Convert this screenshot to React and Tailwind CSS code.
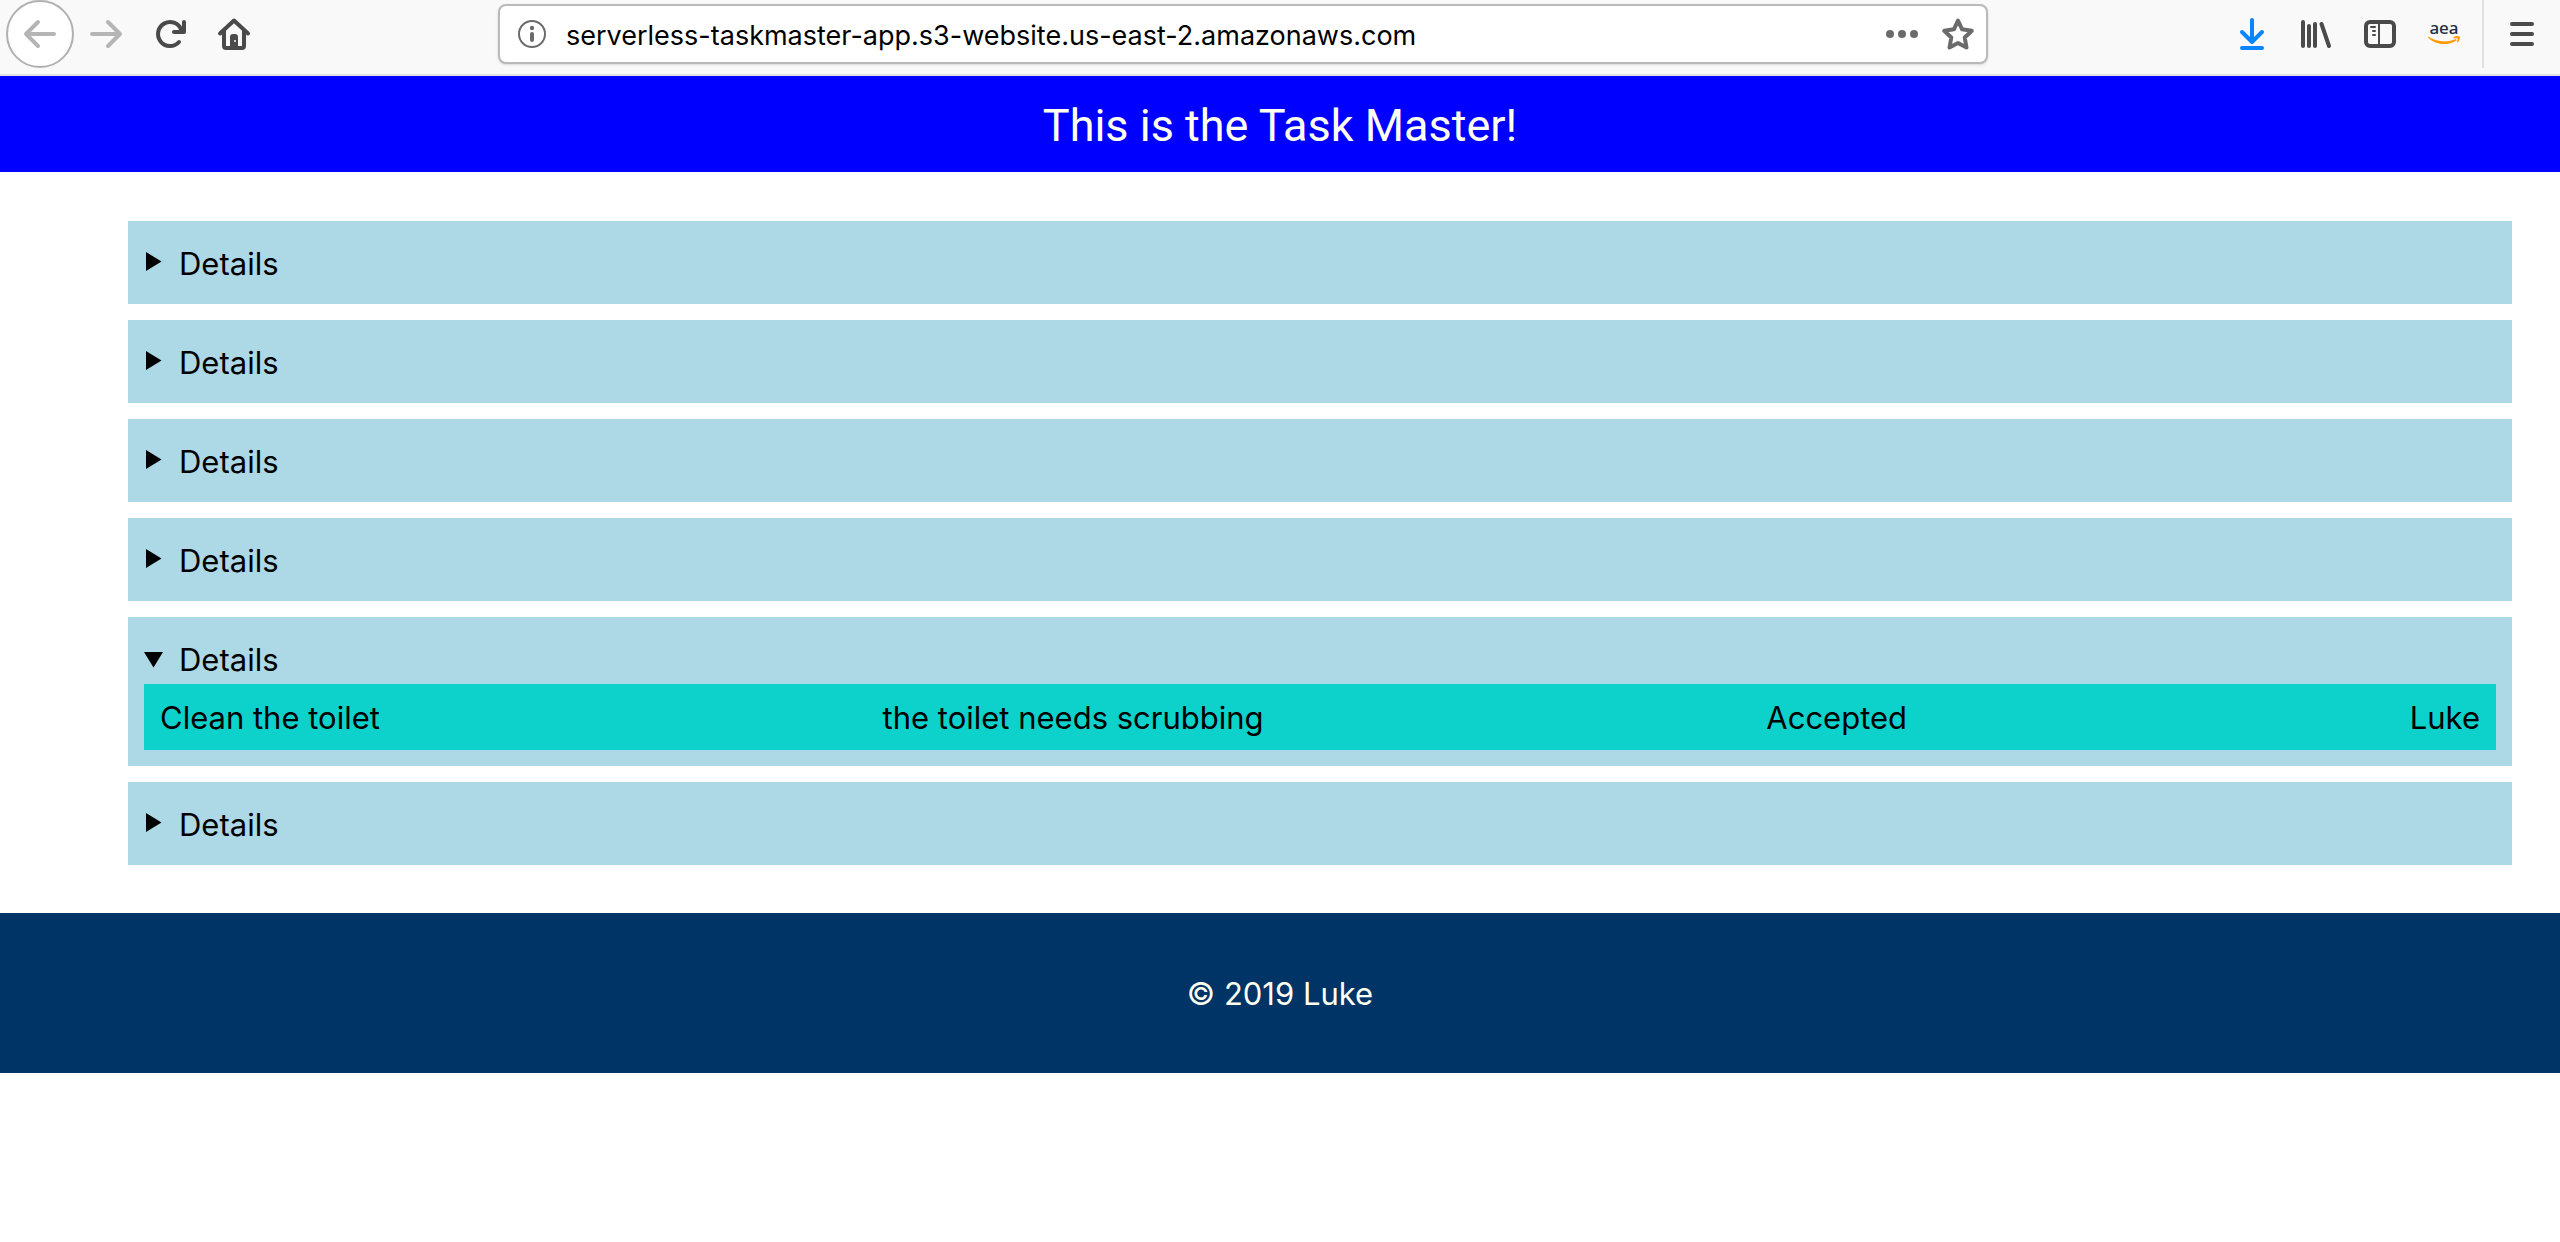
import React from "react";

const tasks = [
  { id: 1, title: "Sweep the floor", description: "the floor needs sweeping", status: "Available", assignee: "Luke" },
  { id: 2, title: "Wash the dishes", description: "the dishes need washing", status: "Available", assignee: "Luke" },
  { id: 3, title: "Fold the laundry", description: "the laundry needs folding", status: "Available", assignee: "Luke" },
  { id: 4, title: "Take out the trash", description: "the trash needs to go out", status: "Available", assignee: "Luke" },
  { id: 5, title: "Clean the toilet", description: "the toilet needs scrubbing", status: "Accepted", assignee: "Luke", open: true },
  { id: 6, title: "Water the plants", description: "the plants need water", status: "Available", assignee: "Luke" },
];

function Icon({ children, className = "" }) {
  return (
    <svg
      viewBox="0 0 32 32"
      className={`size-8 shrink-0 overflow-visible ${className}`}
      fill="none"
      stroke="currentColor"
      strokeWidth="4"
      strokeLinecap="round"
      strokeLinejoin="round"
      aria-hidden="true"
    >
      {children}
    </svg>
  );
}

function ToolButton({ label, children, className = "" }) {
  return (
    <button
      type="button"
      aria-label={label}
      className={`flex h-[68px] w-16 shrink-0 items-center justify-center ${className}`}
    >
      {children}
    </button>
  );
}

function Toolbar() {
  return (
    <nav
      aria-label="Browser toolbar"
      className="flex h-[76px] items-start border-b-2 border-[#e0e0e1] bg-[#f9f9fa] px-[6px] text-[#4a4a4a]"
    >
      <button
        type="button"
        aria-label="Back"
        className="flex size-[68px] shrink-0 items-center justify-center rounded-full border-2 border-[#b1b1b1] bg-white text-[#b5b5b5]"
      >
        <Icon>
          <path d="M2 16H30M14 4L2 16L14 28" />
        </Icon>
      </button>
      <ToolButton label="Forward" className="text-[#b5b5b5]">
        <Icon>
          <path d="M2 16H30M18 4L30 16L18 28" />
        </Icon>
      </ToolButton>
      <ToolButton label="Reload">
        <Icon>
          <path d="M25 24A12 12 0 1 1 27.5 12.5" />
          <path d="M30 4V14H20" />
          <path d="M30 8V14H23Z" fill="currentColor" strokeWidth="1" />
        </Icon>
      </ToolButton>
      <ToolButton label="Home">
        <Icon>
          <path d="M2 15.5L16 2.5L30 15.5" />
          <path d="M6 13V28Q6 30 8 30H24Q26 30 26 28V13" />
          <path d="M12 31V19Q12 16 15 16H17Q20 16 20 19V31Z" fill="currentColor" stroke="none" />
          <circle cx="17" cy="23" r="1" fill="#f9f9fa" stroke="none" />
        </Icon>
      </ToolButton>

      <div className="flex-[232]" />

      <div className="min-w-0 flex-[1490] pt-1">
        <div className="flex h-[60px] items-center rounded-lg border-2 border-[#b9b9b9] bg-white pr-3 pl-[18px] text-[#6b6b6b] shadow-sm">
          <svg viewBox="0 0 28 28" className="size-7 shrink-0" aria-hidden="true">
            <circle cx="14" cy="14" r="13" fill="none" stroke="currentColor" strokeWidth="2" />
            <circle cx="14" cy="8" r="2.2" fill="currentColor" />
            <path d="M14 14V20" stroke="currentColor" strokeWidth="4" strokeLinecap="round" />
          </svg>
          <input
            type="text"
            aria-label="Address"
            defaultValue="serverless-taskmaster-app.s3-website.us-east-2.amazonaws.com"
            className="mx-5 min-w-0 flex-1 bg-transparent pt-1 text-[27px] leading-9 text-black outline-none"
          />
          <button type="button" aria-label="Page actions" className="mr-6">
            <Icon>
              <g fill="currentColor" stroke="none">
                <circle cx="4" cy="16" r="4" />
                <circle cx="16" cy="16" r="4" />
                <circle cx="28" cy="16" r="4" />
              </g>
            </Icon>
          </button>
          <button type="button" aria-label="Bookmark this page">
            <Icon>
              <path d="M16 2.5L20.1 11.3L29.8 12.8L22.7 19.5L24.5 29.5L16 25L7.5 29.5L9.3 19.5L2.2 12.8L11.9 11.3Z" />
            </Icon>
          </button>
        </div>
      </div>

      <div className="flex-[232]" />

      <ToolButton label="Downloads" className="text-[#0a84ff]">
        <Icon>
          <path d="M16 2V23M6 14L16 24L26 14M6 30H26" />
        </Icon>
      </ToolButton>
      <ToolButton label="Library">
        <Icon>
          <path d="M3 4V28M9 8V28M15 6V28M21.5 6L29 28" />
        </Icon>
      </ToolButton>
      <ToolButton label="Sidebars">
        <Icon>
          <rect x="2" y="4" width="28" height="24" rx="4" />
          <path d="M15 5V27M7 9H11M9 13H11M9 17H11" strokeWidth="2" />
        </Icon>
      </ToolButton>
      <ToolButton label="Extension">
        <Icon>
          <text
            x="16"
            y="16"
            textAnchor="middle"
            fill="#232f3e"
            stroke="none"
            className="font-['Noto_Sans',sans-serif] text-[17px] font-medium"
          >
            aea
          </text>
          <g stroke="none" fill="#ff9900">
            <path d="M0.3 18.6C9 24.4 20 24.8 28 21L28.6 22.4C20 27.8 8 27.6 0 19.6Z" />
            <path d="M25.5 19.2C28 17.6 31 17.8 31.8 18.8C32.3 20.5 31.2 23.4 29.4 24.6L28.8 24C29.6 22.4 30 21 29.7 20.5C29.2 20 27.2 20.2 25.6 20.4Z" />
          </g>
        </Icon>
      </ToolButton>
      <div className="mx-[6px] h-[68px] w-[2px] shrink-0 bg-[#e0e0e1]" />
      <ToolButton label="Menu">
        <Icon>
          <path d="M6 6H26M6 16H26M6 26H26" />
        </Icon>
      </ToolButton>
    </nav>
  );
}

function Task({ task }) {
  return (
    <li>
      <details open={task.open} className="group bg-[#add8e6] px-4 pt-[26px] pb-4">
        <summary className="mb-[7px] flex cursor-pointer list-none gap-4 leading-[34px]">
          <svg viewBox="0 0 19 34" className="h-[34px] w-[19px] group-open:hidden" aria-hidden="true">
            <path d="M2 5L17.5 14.5L2 24Z" />
          </svg>
          <svg viewBox="0 0 19 34" className="hidden h-[34px] w-[19px] group-open:block" aria-hidden="true">
            <path d="M0 9H19L9.5 24.5Z" />
          </svg>
          Details
        </summary>
        <div className="flex justify-between bg-[#0dd2cb] px-4 pt-[17px] pb-[15px] leading-[34px]">
          <span>{task.title}</span>
          <span>{task.description}</span>
          <span>{task.status}</span>
          <span>{task.assignee}</span>
        </div>
      </details>
    </li>
  );
}

export default function App() {
  return (
    <div className="min-h-screen bg-white font-['Inter',sans-serif] text-[31px] text-black">
      <Toolbar />
      <header className="bg-[#0000ff] pt-[22px] pb-[18px] text-center text-[#fffff0]">
        <h1 className="font-['Roboto',sans-serif] text-[45px] leading-[56px]">This is the Task Master!</h1>
      </header>
      <main className="pt-[49px] pr-12 pb-12 pl-32">
        <ul className="flex flex-col gap-4">
          {tasks.map((task) => (
            <Task key={task.id} task={task} />
          ))}
        </ul>
      </main>
      <footer className="bg-[#003366] pt-[61px] pb-[59px] text-center leading-10 text-[#fffff0]">
        <p>© 2019 Luke</p>
      </footer>
    </div>
  );
}
